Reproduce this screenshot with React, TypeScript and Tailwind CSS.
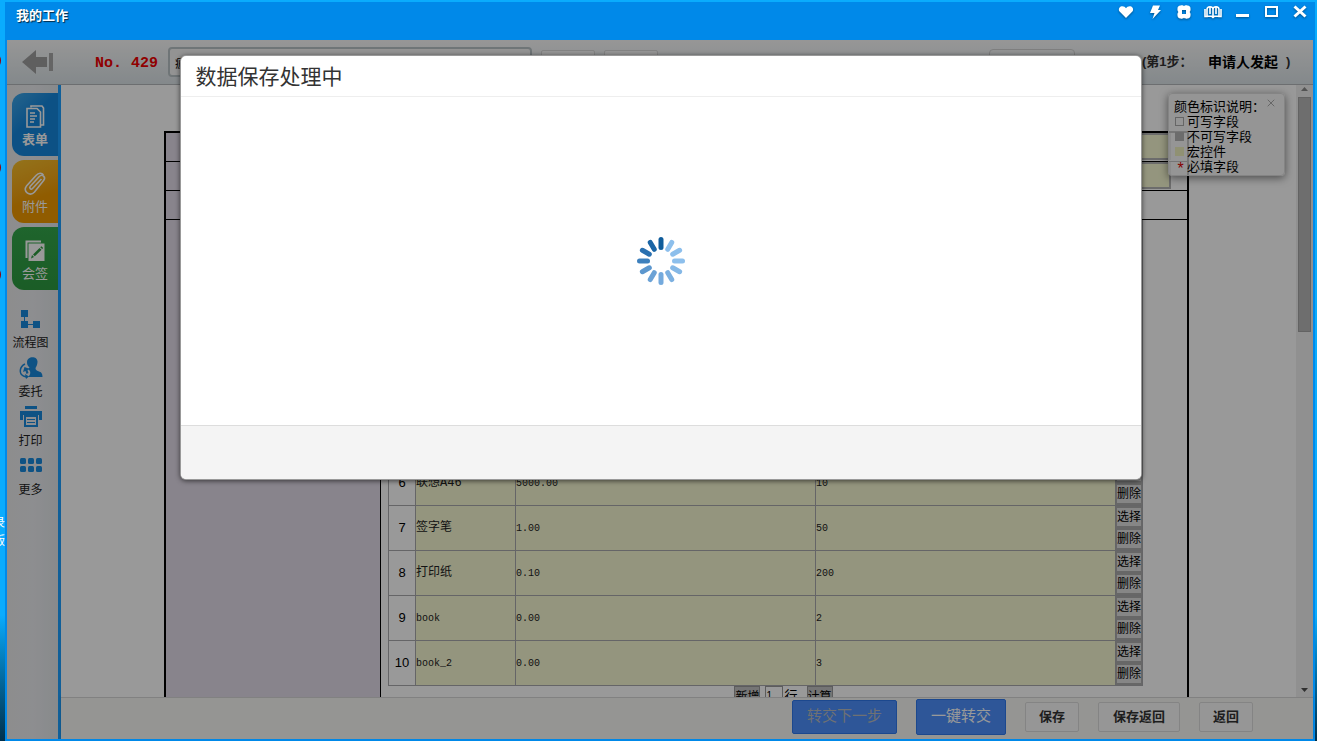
import React from "react";
import { X } from "lucide-react";

type Item = { name: string; price: string; count: string };

const EMPTY: Item = { name: "", price: "", count: "" };

const items: Item[] = [
  EMPTY,
  EMPTY,
  EMPTY,
  EMPTY,
  EMPTY,
  { name: "联想A46", price: "5000.00", count: "10" },
  { name: "签字笔", price: "1.00", count: "50" },
  { name: "打印纸", price: "0.10", count: "200" },
  { name: "book", price: "0.00", count: "2" },
  { name: "book_2", price: "0.00", count: "3" },
];

function WindowIcons() {
  const btn = "w-4 h-4 flex items-center justify-center drop-shadow-[0_1px_1px_rgba(0,0,0,0.4)]";
  return (
    <div className="flex items-start gap-[13px] text-white">
      <button aria-label="收藏" className={btn}>
        <svg width="16" height="16" viewBox="0 0 16 16" fill="currentColor">
          <path d="M8 14 1.6 7.6C.2 6 .8 3 3.6 2.3 5.500 2 7.200 2.900 8 4.300c.8-1.400 2.500-2.300 4.400-2C15.200 3 15.800 6 14.400 7.600z" />
        </svg>
      </button>
      <button aria-label="快捷" className={btn}>
        <svg width="16" height="16" viewBox="0 0 16 16" fill="currentColor">
          <path d="M6 1.500h7L11 6h3L5.500 15l2-6H3z" />
        </svg>
      </button>
      <button aria-label="主题" className={btn}>
        <svg width="16" height="16" viewBox="0 0 16 16" fill="currentColor" fillRule="evenodd">
          <path d="M4.500 1.500C6 .9 7.500 1.500 8 2.200 8.500 1.500 10 .9 11.500 1.500c2.200 0 3.200 1.700 3 3.400.3 1.300-.2 2.400-.9 3.100.7.700 1.200 1.800.9 3.100.2 1.700-.8 3.400-3 3.400-1.500.6-3 0-3.500-.7-.5.7-2 1.300-3.500.7-2.200 0-3.200-1.700-3-3.400-.3-1.300.2-2.400.9-3.100-.7-.7-1.200-1.800-.9-3.100-.2-1.700.8-3.400 3-3.400zM6 6v4h4V6z" />
        </svg>
      </button>
      <button aria-label="帮助" className={btn}>
        <svg className="shrink-0" width="18" height="16" viewBox="0 0 18 16" fill="none" stroke="currentColor" strokeWidth="1.600">
          <path d="M9 13.500V5.500C9 3.500 7.800 2.800 6 2.800S3 3.500 3 5.500V12.500H1V5M9 13.500V5.500c0-2 1.200-2.700 3-2.700s3 .7 3 2.700v7h2V5M6 3v7M12 3v7M3 12.200h4.500L9 13.500l1.500-1.300H15" />
        </svg>
      </button>
      <button aria-label="最小化" className={btn}>
        <svg width="16" height="16" viewBox="0 0 16 16" fill="currentColor">
          <path d="M2 10h13v3H2z" />
        </svg>
      </button>
      <button aria-label="最大化" className={btn}>
        <svg width="16" height="16" viewBox="0 0 16 16" fill="none" stroke="currentColor" strokeWidth="2">
          <path d="M3 3h11v9H3z" />
        </svg>
      </button>
      <button aria-label="关闭" className={btn}>
        <svg width="16" height="16" viewBox="0 0 16 16" fill="none" stroke="currentColor" strokeWidth="3">
          <path d="M2.500 2.500 13.500 12.500M13.500 2.500 2.500 12.500" />
        </svg>
      </button>
    </div>
  );
}

function TopBar() {
  return (
    <header className="h-[45px] shrink-0 flex items-center bg-linear-to-b from-[#fbfbfb] to-[#dce4e8] border-b border-[#b4b8bb]">
      <button aria-label="返回" className="ml-[15px] w-8 h-7">
        <svg width="32" height="28" viewBox="0 0 32 28" fill="#9f9f9f">
          <path d="M0 14 14 2v7h11v10H14v7z" />
          <path d="M27 5h4v18h-4z" fill="#a8a8a8" />
        </svg>
      </button>
      <strong className="ml-[41px] w-[73px] pt-1 text-[15px] text-[#f00000] font-['Liberation_Mono','Noto_Sans_CJK_SC',monospace] whitespace-nowrap">
        No. 429
      </strong>
      <input
        aria-label="标题"
        defaultValue="疲"
        className="w-[364px] h-[30px] px-[5px] text-xs bg-[#f6f6f6] border-2 border-[#b9c3c6] rounded"
      />
      <button aria-label="编辑" className="ml-[9px] w-[54px] h-6 border border-[#dadada] rounded-xs bg-[#fafafa]" />
      <button aria-label="查看" className="ml-[9px] w-[54px] h-6 border border-[#dadada] rounded-xs bg-[#fafafa]" />
      <span className="flex-1" />
      <button aria-label="流程" className="w-[86px] h-[27px] mr-[67px] border border-[#d2d2d2] rounded" />
      <div className="w-[171px] flex text-[13px] leading-5 font-bold text-[#333] whitespace-nowrap">
        <span className="w-[66px]">(第1步：</span>
        <span className="mr-2 text-[14px] text-black">申请人发起</span>)
      </div>
    </header>
  );
}

function Sidebar() {
  const tab = "w-[46px] h-[63px] rounded-l-xl flex flex-col items-center pt-[11px] text-white text-[13px] leading-5";
  const tool = "w-full h-[49px] flex flex-col items-center text-xs leading-5 text-[#222]";
  return (
    <nav className="w-[54px] shrink-0 border-r-3 border-[#1b9fff] bg-linear-to-r from-[#ececec] via-[#ecedf0] to-[#e2e6ea] pt-2 flex flex-col items-end">
      <div className="flex flex-col gap-1">
        <button className={`${tab} bg-linear-135 from-[#3fa8ea] to-[#1488de] to-40% font-bold`}>
          <svg width="24" height="26" viewBox="0 0 24 26" fill="none" stroke="currentColor" strokeWidth="1.600">
            <path d="M8 3.500V2h11l1.500 2V21H18" />
            <path d="M4 4.500h10l3.500 3.500V23H4zM7 9h5M7 12h7M7 15h5M7 18h4" />
          </svg>
          表单
        </button>
        <button className={`${tab} bg-linear-160 from-[#f7c02d] to-[#f09a00] to-60%`}>
          <svg width="24" height="26" viewBox="0 0 24 26" fill="none" stroke="currentColor" strokeWidth="1.600">
            <path d="m18.500 8-9 9.500c-1.700 1.700-3.700-.5-2.200-2.200l9-9.800c3-3 7 .5 4.300 4L11.500 21C7 26-.8 20.500 3.500 15L13 4.500c3-3.500 6-2.500 7.500-.5" />
          </svg>
          附件
        </button>
        <button className={`${tab} bg-linear-to-b from-[#34a84b] to-[#2d9b40]`}>
          <svg width="24" height="26" viewBox="0 0 24 26">
            <path d="M3.500 20V3.500H18" fill="none" stroke="#fff" strokeWidth="2" />
            <path d="M5.500 5.500h16V23h-16z" fill="#fff" />
            <path d="m8 20.500 1-3.500 2 2zM10 16.500l6.500-6.500 2 1.800-6.700 6.500zM17.200 9.300l1.200-1 1.800 1.800-1 1z" fill="#2c9b3f" />
          </svg>
          会签
        </button>
      </div>

      <div className="w-[47px] mt-[17px] mr-1 flex flex-col">
        <button className={tool}>
          <svg width="24" height="26" viewBox="0 0 24 26" fill="#1889dc">
            <path d="M2 3h7v7H2zM2 14h7v7H2zM14 14h7v7h-7z" />
            <path d="M5 10h1v5H5zM9 17h6v1H9z" />
          </svg>
          流程图
        </button>
        <button className={tool}>
          <svg width="24" height="26" viewBox="0 0 24 26" fill="#1889dc">
            <path d="M8 6c0-6.500 11-6.500 10.500 0-.2 3-1 4.500-2 6 0 2 1 2.500 3 3.200 3 1 4 2.300 4 5.800H9c3-3 3-6 0-8l1.500-1.500C8.500 9.500 8 8.500 8 6z" />
            <path d="M6 8C0 11 0 18 4.500 20l3 1" fill="none" stroke="#1889dc" strokeWidth="1.500" />
            <path d="m5.500 11-1.500 5 2.500-1 1 3 2-1-1-3 2.500-1z" />
            <path d="m6 18 4 2.500L7 23z" />
          </svg>
          委托
        </button>
        <button className={tool}>
          <svg width="24" height="26" viewBox="0 0 24 26" fill="#1889dc">
            <path d="M6 1h12v3H6zM1 6h22v9h-3v-5H4v5H1z" />
            <path d="M6 11h12v10H6z" fill="none" stroke="#1889dc" strokeWidth="2" />
            <path d="M8 14h8v1H8zM8 17h8v1H8z" />
          </svg>
          打印
        </button>
        <button className={tool}>
          <svg width="24" height="26" viewBox="0 0 24 26" fill="#1889dc">
            {[4, 12].map((y) =>
              [1, 9, 17].map((x) => <rect key={`${x}-${y}`} x={x} y={y} width="6" height="6" rx="1.500" />)
            )}
          </svg>
          更多
        </button>
      </div>
    </nav>
  );
}

function ItemTable() {
  const cell = "border border-[#a9a9ac] p-0";
  const field = "bg-[#f7f9d2] text-left text-[10px] text-[#222] font-['Liberation_Mono','Noto_Sans_CJK_SC',monospace]";
  const small =
    "flex items-center justify-center w-full h-[22px] bg-[#e0e0e0] border-y-2 border-x border-[#acacac] text-xs whitespace-nowrap";
  return (
    <table className="w-full table-fixed border-collapse">
      <colgroup>
        <col className="w-[27px]" />
        <col className="w-[100px]" />
        <col className="w-[300px]" />
        <col />
        <col className="w-[27px]" />
      </colgroup>
      <thead>
        <tr className="h-[15px]">
          <th className={cell} />
          <th className={cell} />
          <th className={cell} />
          <th className={cell} />
          <th className={cell} />
        </tr>
      </thead>
      <tbody>
        {items.map((it, i) => (
          <tr key={i} className="h-[45px]">
            <td className={`${cell} text-center text-[13px]`}>{i + 1}</td>
            <td className={`${cell} ${field}`}>
              <span className={/^\w+$/.test(it.name) ? "" : "text-xs"}>{it.name}</span>
            </td>
            <td className={`${cell} ${field}`}>{it.price}</td>
            <td className={`${cell} ${field}`}>{it.count}</td>
            <td className={cell}>
              <button className={small}>选择</button>
              <button className={small}>删除</button>
            </td>
          </tr>
        ))}
      </tbody>
    </table>
  );
}

function FormSheet() {
  const label = "bg-[#e3dce9] border-r border-black";
  const row = "grid grid-cols-[215px_1fr] border-b border-black h-[29px]";
  const macro = "block ml-auto mr-4 w-40 h-[27px] bg-[#f7f9d2] border-2 border-[#b4b4b4]";
  return (
    <div className="mt-[46px] ml-[103px] mr-[107px] border-2 border-black">
      <div className={row}>
        <div className={label} />
        <input aria-label="申请人" className={macro} />
      </div>
      <div className={row}>
        <div className={label} />
        <input aria-label="部门" className={macro} />
      </div>
      <div className={row}>
        <div className={label} />
        <div />
      </div>
      <div className="grid grid-cols-[215px_1fr]">
        <div className={label} />
        <div className="pl-[7px] pb-10">
          <div className="pr-11">
            <ItemTable />
          </div>
          <div className="flex justify-center items-start gap-[5px] pr-2 text-xs leading-5">
            <button className="w-[26px] h-5 bg-[#c4c4c4] border border-[#999] whitespace-nowrap">新增</button>
            <input aria-label="行数" defaultValue="1" className="w-[18px] h-5 border border-[#999] text-[10px]" />
            <span className="-ml-1 mr-1 text-[13px]">行</span>
            <button className="w-[26px] h-5 bg-[#c4c4c4] border border-[#999] whitespace-nowrap">计算</button>
          </div>
        </div>
      </div>
    </div>
  );
}

function Legend() {
  const line = "flex items-center h-[15px]";
  const box = "w-[9px] h-[9px] ml-px mr-[3px]";
  return (
    <div className="absolute top-2 right-[28px] w-[117px] h-[83px] pl-[5px] pt-[5px] rounded bg-[#f6f6f6]/80 border border-[#ddd] shadow-[0_2px_8px_rgba(0,0,0,0.5)] text-[13px] leading-[15px]">
      <button aria-label="关闭说明" className="absolute top-[3px] right-[7px] text-[#aaa]">
        <X size={12} />
      </button>
      <p className="whitespace-nowrap">颜色标识说明：</p>
      <p className={line}><i className={`${box} border border-[#aaa]`} />可写字段</p>
      <p className={line}><i className={`${box} bg-[#b5b5b5]`} />不可写字段</p>
      <p className={line}><i className={`${box} bg-[#f0f2c0]`} />宏控件</p>
      <p className={line}><span className="w-[13px] pt-1 text-center text-[16px] text-[#e00000]">*</span>必填字段</p>
    </div>
  );
}

function Scrollbar() {
  return (
    <div className="w-[17px] shrink-0 bg-[#f0f0f0] flex flex-col items-center" aria-hidden="true">
      <svg width="17" height="12" viewBox="0 0 17 12" fill="#8b8b8b">
        <path d="m5 6 3.500-4L12 6z" />
      </svg>
      <div className="w-[13px] h-[235px] bg-[#b8b8b8] border border-[#a6a6a6]" />
      <span className="flex-1" />
      <svg width="17" height="14" viewBox="0 0 17 14" fill="#505050">
        <path d="m5 5 3.500 4L12 5z" />
      </svg>
    </div>
  );
}

function ActionBar() {
  const plain = "h-[30px] border border-[#ddd] rounded-xs bg-[#fafafa] text-[13px] font-bold text-[#333]";
  return (
    <footer className="h-[42px] shrink-0 flex items-center justify-end pr-[60px] pb-1 bg-[#f9f9f5] border-t border-[#d8d8d8] shadow-[0_-1px_2px_rgba(0,0,0,0.2)]">
      <button disabled className="w-[105px] h-[34px] mr-[19px] rounded-xs bg-[#4d90fe] border border-[#3079ed] text-[15px] text-[#b9bcc0]">
        转交下一步
      </button>
      <button className="w-[90px] h-9 mr-[19px] rounded-xs bg-[#4d90fe] border border-[#3079ed] text-[15px] text-white">
        一键转交
      </button>
      <button className={`${plain} w-[54px] mr-[19px]`}>保存</button>
      <button className={`${plain} w-[82px] mr-[19px]`}>保存返回</button>
      <button className={`${plain} w-[54px]`}>返回</button>
    </footer>
  );
}

const spokes = [
  "#0f5c9b", "#8dbfec", "#8dbfec", "#8dbfec", "#85b8e6", "#7cb0e0",
  "#74aadd", "#6ba2d6", "#5c97ce", "#3d80bd", "#2a70b0", "#1b65a5",
];

function Spinner() {
  return (
    <svg width="48" height="48" viewBox="0 0 48 48" role="img" aria-label="处理中">
      {spokes.map((color, i) => (
        <rect key={i} x="21.500" y="0" width="5" height="13" rx="2.500" fill={color} transform={`rotate(${i * 30} 24 24)`} />
      ))}
    </svg>
  );
}

function SavingDialog() {
  return (
    <div className="absolute inset-0 bg-black/40 flex justify-center items-start pt-[15px] pl-px">
      <div
        role="dialog"
        aria-labelledby="saving-title"
        className="w-[962px] max-w-full rounded-md bg-white border border-black/40 shadow-[0_1px_5px_rgba(0,0,0,0.6)] overflow-hidden"
      >
        <h2 id="saving-title" className="h-[41px] px-[15px] text-[21px] leading-[41px] text-[#333] border-b border-[#eee]">
          数据保存处理中
        </h2>
        <div className="h-[328px] flex items-center justify-center">
          <Spinner />
        </div>
        <div className="h-[54px] bg-[#f4f4f4] border-t border-[#ddd]" />
      </div>
    </div>
  );
}

// strip of the desktop that shows left of the window
function DesktopEdge() {
  const badge = "absolute -left-4 w-[17px] h-[17px] rounded-full bg-[#8c0010]";
  return (
    <aside className="relative w-[5px] shrink-0 overflow-hidden text-[12px] leading-4 text-white">
      <i className={`${badge} top-[50px]`} />
      <i className={`${badge} top-[157px]`} />
      <i className={`${badge} top-[264px]`} />
      <span className="absolute right-0 top-[513px]">录</span>
      <span className="absolute right-0 top-[531px]">版</span>
    </aside>
  );
}

export default function App() {
  return (
    <div className="h-screen overflow-hidden flex pt-[2px] pr-[2px] bg-linear-to-b from-[#0aacfd] from-83% to-[#00304c] to-100% font-['Liberation_Sans','Noto_Sans_CJK_SC',sans-serif] text-black">
      <DesktopEdge />
      <div className="flex-1 min-w-0 flex flex-col bg-[#0089e9] px-[2px] pb-[2px]">
        <div className="h-[38px] shrink-0 flex justify-between pl-[9px] pr-[5px] pt-[2px]">
          <h1 className="text-[13px] leading-6 font-bold text-white [text-shadow:1px_1px_1px_rgba(0,0,0,0.7)]">我的工作</h1>
          <WindowIcons />
        </div>
        <div className="relative flex-1 min-h-0 flex flex-col">
          <TopBar />
          <div className="flex-1 min-h-0 flex">
            <Sidebar />
            <main className="flex-1 min-w-0 flex flex-col">
              <div className="relative flex-1 min-h-0 flex bg-white">
                <div className="flex-1 min-w-0 overflow-hidden">
                  <FormSheet />
                </div>
                <Scrollbar />
                <Legend />
              </div>
              <ActionBar />
            </main>
          </div>
          <SavingDialog />
        </div>
      </div>
    </div>
  );
}
